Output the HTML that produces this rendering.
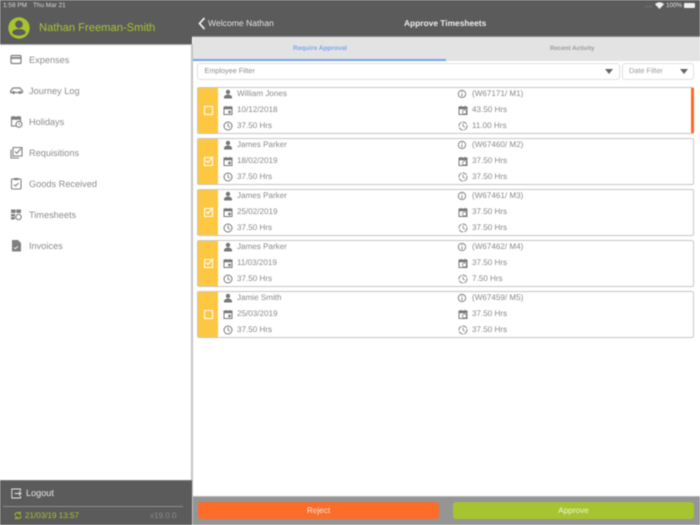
<!DOCTYPE html>
<html><head><meta charset="utf-8"><style>
html,body{margin:0;padding:0;width:700px;height:525px;overflow:hidden;background:#fff;font-family:"Liberation Sans",sans-serif;text-rendering:geometricPrecision}
div,span,svg{position:absolute;box-sizing:border-box}
#w{left:0;top:0;width:700px;height:525px;overflow:hidden;background:#fff;filter:blur(.4px)}
.t{white-space:nowrap;line-height:12px}
.m{color:#8c8c8c;font-size:9.200px;left:29px}
.m svg{left:-19px;top:-1px}
.c{left:197px;width:497px;height:47px;border:1px solid #c6c6c6;border-radius:2px;background:#fff}
.y{left:0;top:0;width:20px;height:45px;background:#fdc741}
.b{left:6px;top:18px;width:8.500px;height:8.500px;border:1.100px solid #fff}
.r{color:#8a8a8a;font-size:8.100px;white-space:nowrap;line-height:12px}
</style></head><body>
<svg width="0" height="0" style="left:0;top:0"><defs>
<g id="p"><circle cx="5" cy="3" r="2.200" fill="#777"/><path d="M1 9.500V8c0-1.500 2.500-2.500 4-2.500S9 6.500 9 8v1.500z" fill="#777"/></g>
<g id="d"><rect x="1" y="2" width="8" height="7.500" fill="none" stroke="#777"/><path d="M1 2h8v2H1zM3 .5v2M7 .5v2M5.500 6h2v2h-2z" fill="#777" stroke="#777" stroke-width=".5"/></g>
<g id="k"><circle cx="5" cy="5" r="4" fill="none" stroke="#777"/><path d="M5 2.500V5l1.800 1.200" fill="none" stroke="#777" stroke-width=".9"/></g>
<g id="n"><circle cx="5" cy="5" r="3.700" fill="none" stroke="#777" stroke-width=".9"/><path d="M5 4.500v3M5 2.500v1" stroke="#777" stroke-width=".9"/></g>
<g id="h"><rect x="1" y="2" width="8" height="7.500" fill="none" stroke="#777"/><path d="M1 2h8v2H1zM3 .5v2M7 .5v2" fill="#777" stroke="#777" stroke-width=".6"/><circle cx="6.500" cy="7" r="2" fill="#fff" stroke="#777" stroke-width=".8"/></g>
<g id="q"><circle cx="5" cy="5" r="4" fill="none" stroke="#888" stroke-dasharray="5 1"/><path d="M5 2.500V5l1.800 1.200" fill="none" stroke="#888" stroke-width=".9"/></g>
</defs></svg>
<div id="w">
<div style="left:0;top:0;width:192px;height:44px;background:#5b5b5b"></div>
<div style="left:192px;top:0;width:508px;height:37px;background:#5b5b5b"></div>
<div style="left:192px;top:36px;width:508px;height:1px;background:#8a8a8a"></div>
<div style="left:0;top:44px;width:192px;height:1px;background:#a8a8a8"></div>
<div style="left:191px;top:44px;width:2px;height:481px;background:#c4c4c4"></div>
<div class="t" style="left:3px;top:0;font-size:6.450px;color:#d8d8d8;line-height:11px">1:58 PM</div>
<div class="t" style="left:33px;top:0;font-size:6.400px;color:#d8d8d8;line-height:11px">Thu Mar 21</div>
<div style="left:645px;top:6px;width:7px;height:1px;border-top:1px dotted #888"></div>
<div class="t" style="left:666px;top:0;font-size:6.250px;color:#e0e0e0;line-height:11px">100%</div>
<svg style="left:655px;top:2px" width="9" height="7" viewBox="0 0 9 7"><path d="M0 2.200C2.500-.400 6.500-.400 9 2.200L4.500 7z" fill="#f0f0f0"/></svg>
<div style="left:684px;top:3px;width:11px;height:5px;background:#eee;border-radius:1px"></div>
<svg style="left:8px;top:17px" width="22" height="22" viewBox="0 0 22 22"><circle cx="11" cy="11" r="10.700" fill="#a6c42f"/><circle cx="11" cy="7.300" r="3.800" fill="#5b5b5b"/><ellipse cx="11" cy="15.300" rx="6.700" ry="3.300" fill="#5b5b5b"/></svg>
<div class="t" style="left:39px;top:21px;font-size:11.200px;line-height:14px;color:#a6c42f">Nathan Freeman-Smith</div>

<div class="t m" style="top:54px">Expenses<svg width="13" height="13" viewBox="0 0 13 13"><rect x="1" y="2.500" width="10" height="8" rx="1" fill="none" stroke="#808080" stroke-width="1.200"/><path d="M1 5h10" stroke="#808080" stroke-width="1.800"/></svg></div>
<div class="t m" style="top:85px">Journey Log<svg width="14" height="13" viewBox="0 0 14 13"><path d="M.5 8.500V7l2.500-3h7l2.500 3v1.500z" fill="none" stroke="#808080" stroke-width="1.200"/><circle cx="3.500" cy="8.500" r="1.500" fill="#808080"/><circle cx="10" cy="8.500" r="1.500" fill="#808080"/></svg></div>
<div class="t m" style="top:116px">Holidays<svg width="13" height="13" viewBox="0 0 13 13"><rect x="1.500" y="2" width="9" height="9" fill="none" stroke="#808080" stroke-width="1.100"/><path d="M1.500 2h9v2.500h-9zM3.500 .5v2M8.500 .5v2" fill="#808080" stroke="#808080" stroke-width=".6"/><circle cx="9" cy="9.300" r="3" fill="#fff" stroke="#808080" stroke-width="1.100"/><path d="M9 7.800v1.500l1 .6" fill="none" stroke="#808080" stroke-width=".7"/></svg></div>
<div class="t m" style="top:147px">Requisitions<svg width="13" height="13" viewBox="0 0 13 13"><path d="M1 3.500v8.500h8M3 1.500h9v8.500H3z" fill="none" stroke="#808080" stroke-width="1.100"/><path d="M5 5.500l1.800 1.800L11 2.500" fill="none" stroke="#808080" stroke-width="1.100"/></svg></div>
<div class="t m" style="top:178px">Goods Received<svg width="13" height="13" viewBox="0 0 13 13"><rect x="1.500" y="2" width="9.500" height="10" rx="1" fill="none" stroke="#808080" stroke-width="1.100"/><path d="M4 1h4.500v2.200H4z" fill="#808080"/><path d="M4 7.500l1.500 1.500L8.500 6" fill="none" stroke="#808080" stroke-width="1.100"/></svg></div>
<div class="t m" style="top:209px">Timesheets<svg width="13" height="13" viewBox="0 0 13 13"><path d="M1 1.500h10V5H1zM1 6h4v5.500H1z" fill="#808080"/><path d="M6 1.500V5M1 8.700h4" stroke="#fff" stroke-width=".7"/><circle cx="8.500" cy="9" r="2.700" fill="#fff" stroke="#808080" stroke-width="1.100"/></svg></div>
<div class="t m" style="top:240px">Invoices<svg width="13" height="13" viewBox="0 0 13 13"><path d="M2 1h6l3 3v8.500H2z" fill="#808080"/><path d="M4 8.500l1.200 1.200L8 7.500" fill="none" stroke="#fff" stroke-width=".8"/></svg></div>

<div style="left:0;top:480px;width:192px;height:45px;background:#5b5b5b;border-top:1px solid #777"></div>
<svg style="left:11px;top:488px" width="11" height="11" viewBox="0 0 11 11"><path d="M9.500 3V1H.8v9h8.700V8" fill="none" stroke="#e8e8e8" stroke-width=".9"/><path d="M3.500 5.500h6.500M8 3.500l2 2-2 2" fill="none" stroke="#e8e8e8" stroke-width=".9"/></svg>
<div class="t" style="left:26px;top:487px;font-size:9.150px;color:#e6e6e6">Logout</div>
<div style="left:3px;top:506px;width:180px;height:1px;background:#8c8c8c"></div>
<svg style="left:14px;top:511px" width="8" height="9" viewBox="0 0 8 9"><path d="M1 4.500A3 3 0 0 1 6 2.200M7 4.500A3 3 0 0 1 2 6.800" fill="none" stroke="#a6c42f"/><path d="M6.500 .5v2.500H4M1.500 8.500V6H4" fill="none" stroke="#a6c42f" stroke-width=".7"/></svg>
<div class="t" style="left:25px;top:510px;font-size:8.100px;color:#a6c42f">21/03/19 13:57</div>
<div class="t" style="left:150px;top:510px;font-size:8.100px;color:#8a8a8a">v19.0.0</div>

<svg style="left:198px;top:17px" width="8" height="13" viewBox="0 0 8 13"><path d="M6.500 1L1.500 6.500l5 5.500" fill="none" stroke="#f0f0f0" stroke-width="1.700"/></svg>
<div class="t" style="left:208px;top:17px;font-size:8.600px;color:#e2e2e2">Welcome Nathan</div>
<div class="t" style="left:404px;top:17px;font-size:8.400px;font-weight:bold;color:#eee">Approve Timesheets</div>

<div style="left:193px;top:37px;width:507px;height:24px;background:#e3e3e3"></div>
<div style="left:193px;top:59px;width:253px;height:2px;background:#77a3ef"></div>
<div class="t" style="left:293px;top:43px;font-size:6.500px;font-weight:bold;color:#7ea6ee">Require Approval</div>
<div class="t" style="left:550px;top:43px;font-size:6.200px;font-weight:bold;color:#9a9a9a">Recent Activity</div>

<div style="left:197px;top:63px;width:423px;height:17px;border:1px solid #e0e0e0;border-radius:3px;background:#fff"></div>
<div class="t" style="left:204.500px;top:65px;font-size:7.250px;color:#8d8d8d">Employee Filter</div>
<div style="left:605px;top:69px;border:4.500px solid transparent;border-top:5px solid #666;border-bottom:0"></div>
<div style="left:622px;top:63px;width:72px;height:17px;border:1px solid #e0e0e0;border-radius:3px;background:#fff"></div>
<div class="t" style="left:629px;top:65px;font-size:7.350px;color:#9a9a9a">Date Filter</div>
<div style="left:680px;top:69px;border:4.500px solid transparent;border-top:5px solid #666;border-bottom:0"></div>

<div class="c" style="top:87px"><div class="y"></div><div class="b"></div><div style="left:493px;top:0;width:3px;height:45px;background:#fb6a27"></div>
<svg style="left:25px;top:1px" width="11" height="11"><use href="#p"/></svg><div class="r" style="left:39px;top:0">William Jones</div>
<svg style="left:25px;top:17px" width="11" height="11"><use href="#d"/></svg><div class="r" style="left:39px;top:16px">10/12/2018</div>
<svg style="left:25px;top:33px" width="11" height="11"><use href="#k"/></svg><div class="r" style="left:39px;top:32px">37.50 Hrs</div>
<svg style="left:259px;top:1px" width="11" height="11"><use href="#n"/></svg><div class="r" style="left:274px;top:0">(W67171/ M1)</div>
<svg style="left:260px;top:17px" width="11" height="11"><use href="#h"/></svg><div class="r" style="left:274px;top:16px">43.50 Hrs</div>
<svg style="left:260px;top:33px" width="11" height="11"><use href="#q"/></svg><div class="r" style="left:274px;top:32px">11.00 Hrs</div></div>

<div class="c" style="top:138px"><div class="y"></div><div class="b"></div><svg style="left:6px;top:16px" width="12" height="11"><path d="M2 5.500l2 2L9 1.500" fill="none" stroke="#fff" stroke-width="1.100"/></svg>
<svg style="left:25px;top:1px" width="11" height="11"><use href="#p"/></svg><div class="r" style="left:39px;top:0">James Parker</div>
<svg style="left:25px;top:17px" width="11" height="11"><use href="#d"/></svg><div class="r" style="left:39px;top:16px">18/02/2019</div>
<svg style="left:25px;top:33px" width="11" height="11"><use href="#k"/></svg><div class="r" style="left:39px;top:32px">37.50 Hrs</div>
<svg style="left:259px;top:1px" width="11" height="11"><use href="#n"/></svg><div class="r" style="left:274px;top:0">(W67460/ M2)</div>
<svg style="left:260px;top:17px" width="11" height="11"><use href="#h"/></svg><div class="r" style="left:274px;top:16px">37.50 Hrs</div>
<svg style="left:260px;top:33px" width="11" height="11"><use href="#q"/></svg><div class="r" style="left:274px;top:32px">37.50 Hrs</div></div>

<div class="c" style="top:189px"><div class="y"></div><div class="b"></div><svg style="left:6px;top:16px" width="12" height="11"><path d="M2 5.500l2 2L9 1.500" fill="none" stroke="#fff" stroke-width="1.100"/></svg>
<svg style="left:25px;top:1px" width="11" height="11"><use href="#p"/></svg><div class="r" style="left:39px;top:0">James Parker</div>
<svg style="left:25px;top:17px" width="11" height="11"><use href="#d"/></svg><div class="r" style="left:39px;top:16px">25/02/2019</div>
<svg style="left:25px;top:33px" width="11" height="11"><use href="#k"/></svg><div class="r" style="left:39px;top:32px">37.50 Hrs</div>
<svg style="left:259px;top:1px" width="11" height="11"><use href="#n"/></svg><div class="r" style="left:274px;top:0">(W67461/ M3)</div>
<svg style="left:260px;top:17px" width="11" height="11"><use href="#h"/></svg><div class="r" style="left:274px;top:16px">37.50 Hrs</div>
<svg style="left:260px;top:33px" width="11" height="11"><use href="#q"/></svg><div class="r" style="left:274px;top:32px">37.50 Hrs</div></div>

<div class="c" style="top:240px"><div class="y"></div><div class="b"></div><svg style="left:6px;top:16px" width="12" height="11"><path d="M2 5.500l2 2L9 1.500" fill="none" stroke="#fff" stroke-width="1.100"/></svg>
<svg style="left:25px;top:1px" width="11" height="11"><use href="#p"/></svg><div class="r" style="left:39px;top:0">James Parker</div>
<svg style="left:25px;top:17px" width="11" height="11"><use href="#d"/></svg><div class="r" style="left:39px;top:16px">11/03/2019</div>
<svg style="left:25px;top:33px" width="11" height="11"><use href="#k"/></svg><div class="r" style="left:39px;top:32px">37.50 Hrs</div>
<svg style="left:259px;top:1px" width="11" height="11"><use href="#n"/></svg><div class="r" style="left:274px;top:0">(W67462/ M4)</div>
<svg style="left:260px;top:17px" width="11" height="11"><use href="#h"/></svg><div class="r" style="left:274px;top:16px">37.50 Hrs</div>
<svg style="left:260px;top:33px" width="11" height="11"><use href="#q"/></svg><div class="r" style="left:274px;top:32px">7.50 Hrs</div></div>

<div class="c" style="top:291px"><div class="y"></div><div class="b"></div>
<svg style="left:25px;top:1px" width="11" height="11"><use href="#p"/></svg><div class="r" style="left:39px;top:0">Jamie Smith</div>
<svg style="left:25px;top:17px" width="11" height="11"><use href="#d"/></svg><div class="r" style="left:39px;top:16px">25/03/2019</div>
<svg style="left:25px;top:33px" width="11" height="11"><use href="#k"/></svg><div class="r" style="left:39px;top:32px">37.50 Hrs</div>
<svg style="left:259px;top:1px" width="11" height="11"><use href="#n"/></svg><div class="r" style="left:274px;top:0">(W67459/ M5)</div>
<svg style="left:260px;top:17px" width="11" height="11"><use href="#h"/></svg><div class="r" style="left:274px;top:16px">37.50 Hrs</div>
<svg style="left:260px;top:33px" width="11" height="11"><use href="#q"/></svg><div class="r" style="left:274px;top:32px">37.50 Hrs</div></div>

<div style="left:193px;top:496px;width:507px;height:29px;background:#959595;border-top:1px solid #b5b5b5"></div>
<div style="left:198px;top:502px;width:241px;height:17px;background:#fc6d2a;border-radius:3px;color:#f5e6dc;font-size:8.200px;line-height:17px;text-align:center">Reject</div>
<div style="left:453px;top:502px;width:241px;height:17px;background:#a6c42f;border-radius:3px;color:#f0f5dc;font-size:8.200px;line-height:17px;text-align:center">Approve</div>
</div>
</body></html>
